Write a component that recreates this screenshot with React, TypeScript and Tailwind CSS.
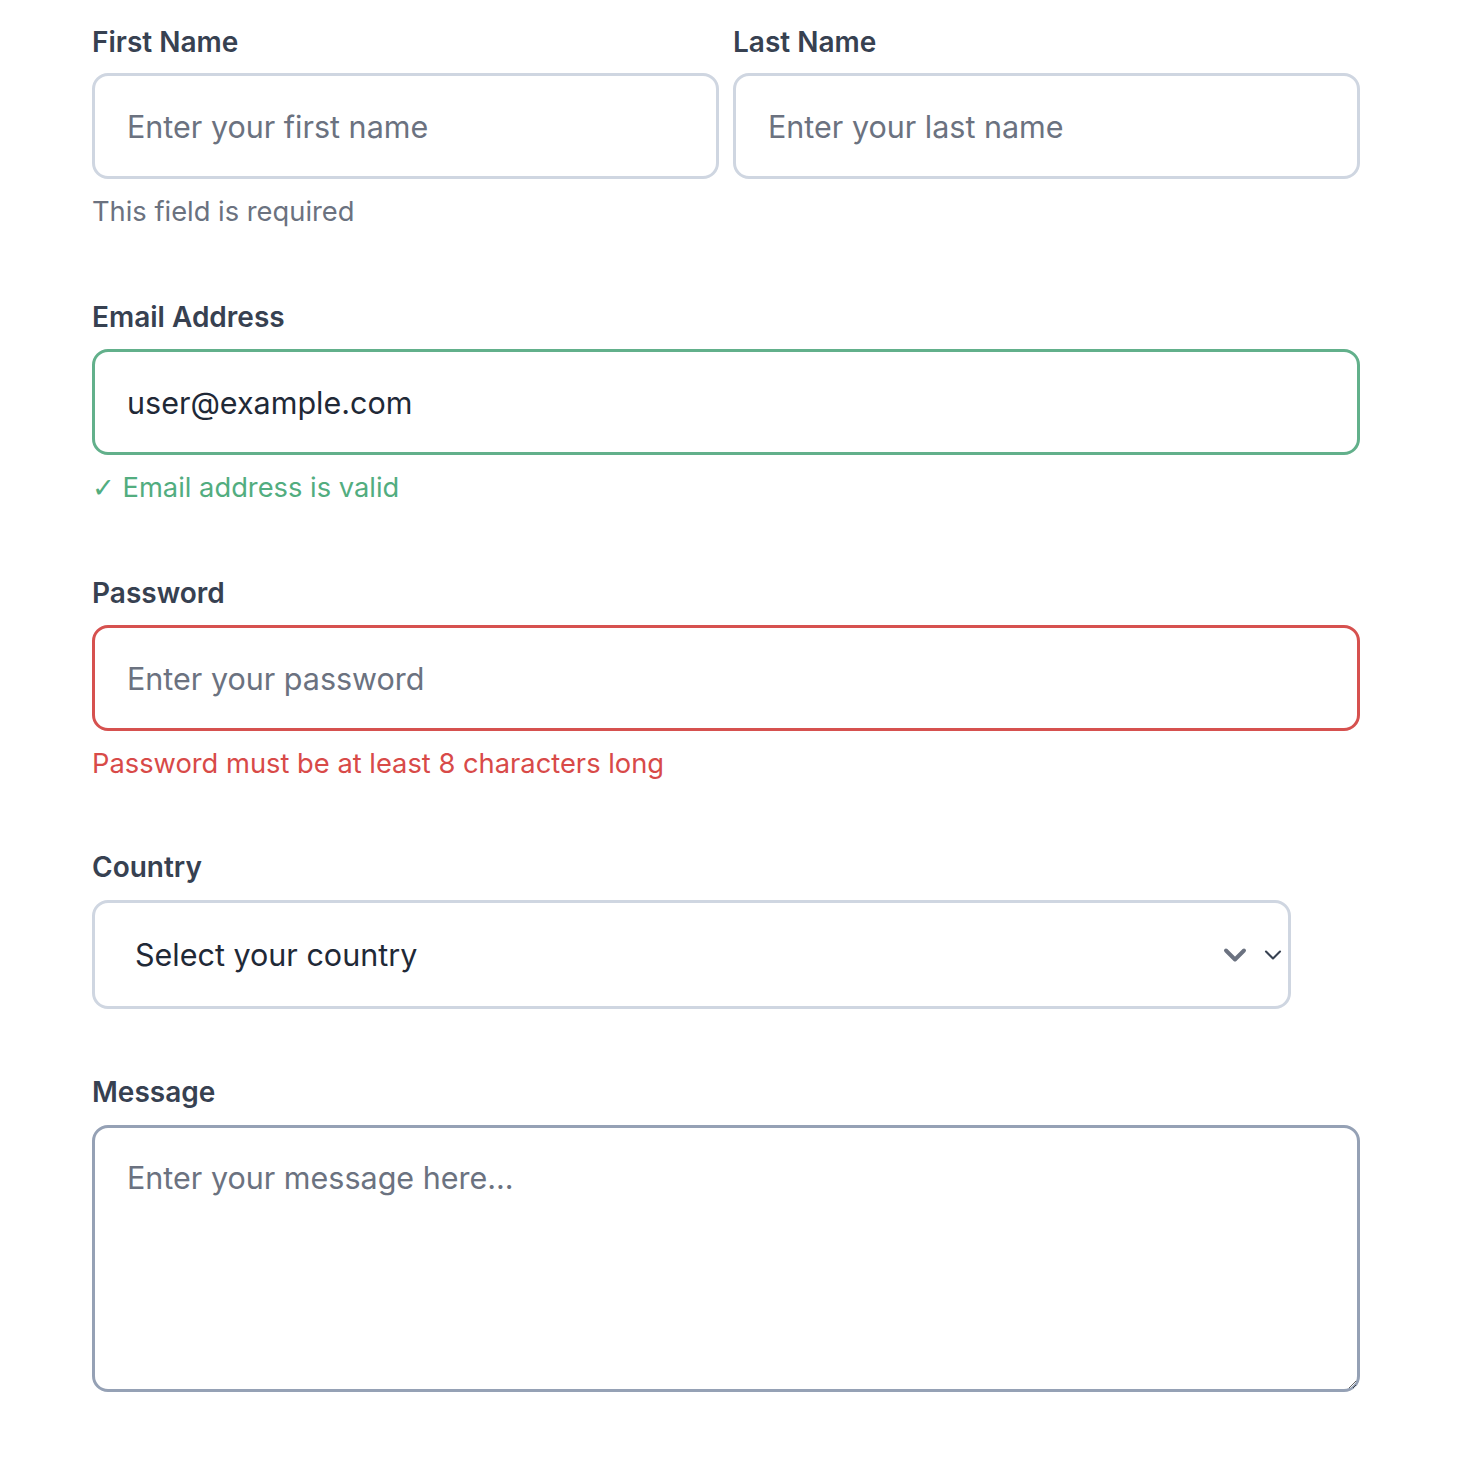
import React from "react";

const font = { fontFamily: 'Inter, "Noto Sans", sans-serif' };

const Chevron = ({ className, strokeWidth }: { className: string; strokeWidth: number }) => (
  <svg viewBox="0 0 24 24" fill="none" stroke="currentColor" strokeWidth={strokeWidth} strokeLinecap="round" strokeLinejoin="round" className={className}>
    <path d="M6 9l6 6 6-6" />
  </svg>
);

const App = () => {
  return (
    <div className="min-h-screen bg-white" style={font}>
      <div className="ml-[92px] w-[1268px] pt-[26px]">
        {/* Name row */}
        <div className="grid grid-cols-2 gap-[14px]">
          <div>
            <label className="block text-[28px] leading-[32px] font-semibold text-[#374151] mb-[15px]">First Name</label>
            <input
              placeholder="Enter your first name"
              className="w-full h-[106px] px-8 rounded-2xl border-[3px] border-[#cfd6e1] text-[30.5px] text-[#1f2937] placeholder:text-[#6b7280] outline-none"
            />
          </div>
          <div>
            <label className="block text-[28px] leading-[32px] font-semibold text-[#374151] mb-[15px]">Last Name</label>
            <input
              placeholder="Enter your last name"
              className="w-full h-[106px] px-8 rounded-2xl border-[3px] border-[#cfd6e1] text-[30.5px] text-[#1f2937] placeholder:text-[#6b7280] outline-none"
            />
          </div>
        </div>
        <p className="mt-4 text-[27.3px] leading-[34px] text-[#6b7280]">This field is required</p>

        {/* Email */}
        <div className="mt-[72px]">
          <label className="block text-[28px] leading-[32px] font-semibold text-[#374151] mb-4">Email Address</label>
          <input
            defaultValue="user@example.com"
            className="w-full h-[106px] px-8 rounded-2xl border-[3px] border-[#62b08b] text-[30.5px] text-[#1f2937] outline-none"
          />
          <p className="mt-4 text-[27.3px] leading-[34px] text-[#52ad7f]">
            <span className="font-bold" style={{ fontFamily: '"DejaVu Sans", sans-serif' }}>✓</span> Email address is valid
          </p>
        </div>

        {/* Password */}
        <div className="mt-[72px]">
          <label className="block text-[28px] leading-[32px] font-semibold text-[#374151] mb-4">Password</label>
          <input
            type="password"
            placeholder="Enter your password"
            className="w-full h-[106px] px-8 rounded-2xl border-[3px] border-[#d6514f] text-[30.5px] text-[#1f2937] placeholder:text-[#6b7280] outline-none"
          />
          <p className="mt-4 text-[27.3px] leading-[34px] text-[#d84a48]">Password must be at least 8 characters long</p>
        </div>

        {/* Country */}
        <div className="mt-[70px]">
          <label className="block text-[28px] leading-[32px] font-semibold text-[#374151] mb-[17px]">Country</label>
          <div className="w-[1199px] h-[109px] pl-10 pr-[1px] rounded-2xl border-[3px] border-[#cfd6e1] flex items-center">
            <span className="flex-1 text-[30.5px] text-[#1f2937]">Select your country</span>
            <Chevron className="w-9 h-9 text-[#6b7280]" strokeWidth={2.6} />
            <Chevron className="ml-[6px] w-7 h-7 text-[#374151]" strokeWidth={1.8} />
          </div>
        </div>

        {/* Message */}
        <div className="mt-[67px]">
          <label className="block text-[28px] leading-[32px] font-semibold text-[#374151] mb-[17px]">Message</label>
          <textarea
            placeholder="Enter your message here..."
            className="block w-full h-[267px] px-8 pt-[28px] rounded-2xl border-[3px] border-[#95a1b5] text-[30.5px] leading-[44px] text-[#1f2937] placeholder:text-[#6b7280] outline-none"
          />
        </div>
      </div>
    </div>
  );
};

export default App;
